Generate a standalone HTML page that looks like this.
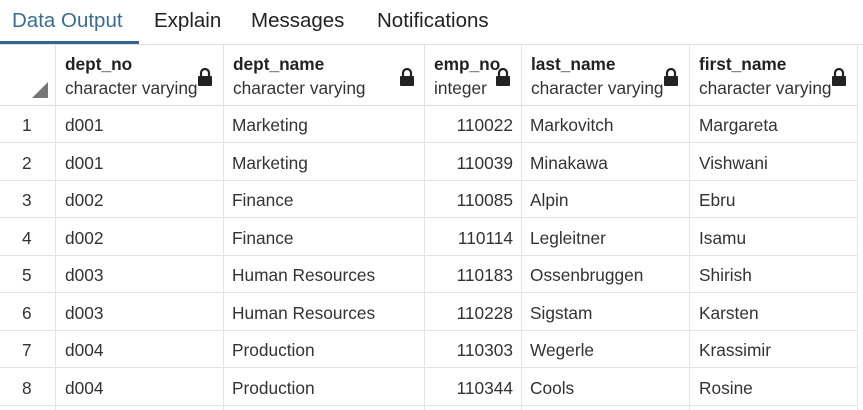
<!DOCTYPE html>
<html><head><style>
body{margin:0;width:863px;height:410px;overflow:hidden;background:#fff;font-family:"Liberation Sans",sans-serif;color:#222;position:relative}
.tabs{position:absolute;left:0;top:0;width:863px;height:44px;border-bottom:1px solid #dde0e6}
.tab{position:absolute;top:9px;font-size:20.5px;color:#222}
.ul{position:absolute;left:0;top:41px;width:139px;height:3px;background:#326690}
.v{position:absolute;top:45px;height:365px;width:1px;background:#e2e4e8}
.h{position:absolute;left:0;width:857px;height:1px;background:#e2e4e8}
.t{position:absolute;font-size:17.3px;color:#333;white-space:nowrap}
.b{font-weight:bold;color:#222}
.lock{position:absolute;width:16px;height:18px}
</style></head><body>
<div class="tabs">
<div class="tab" style="left:12px;color:#3a6c94">Data Output</div>
<div class="tab" style="left:154px">Explain</div>
<div class="tab" style="left:251px">Messages</div>
<div class="tab" style="left:377px">Notifications</div>
<div class="ul"></div>
</div>
<div style="position:absolute;left:0;top:45px;width:857px;height:365px;border-right:1px solid #e2e4e8"></div>
<div class="v" style="left:55px"></div><div class="v" style="left:223px"></div><div class="v" style="left:424px"></div><div class="v" style="left:521px"></div><div class="v" style="left:689px"></div><div class="v" style="left:857px"></div>
<div class="h" style="top:105px;background:#d8dbe0"></div>
<div class="h" style="top:142px"></div><div class="h" style="top:180px"></div><div class="h" style="top:217px"></div><div class="h" style="top:255px"></div><div class="h" style="top:292px"></div><div class="h" style="top:330px"></div><div class="h" style="top:367px"></div><div class="h" style="top:405px"></div>
<svg style="position:absolute;left:32px;top:82px" width="17" height="17"><polygon points="16,0 16,16 0,16" fill="#777"/></svg>
<div class="t b" style="left:65px;top:54px">dept_no</div><div class="t" style="left:65px;top:78px">character varying</div>
<div class="t b" style="left:233px;top:54px">dept_name</div><div class="t" style="left:233px;top:78px">character varying</div>
<div class="t b" style="left:434px;top:54px">emp_no</div><div class="t" style="left:434px;top:78px">integer</div>
<div class="t b" style="left:531px;top:54px">last_name</div><div class="t" style="left:531px;top:78px">character varying</div>
<div class="t b" style="left:699px;top:54px">first_name</div><div class="t" style="left:699px;top:78px">character varying</div>
<svg class="lock" style="left:197px;top:68px" viewBox="0 0 16 18"><path d="M4 8V5a4 4 0 0 1 8 0v3" fill="none" stroke="#222" stroke-width="2.2"/><rect x="1" y="8" width="14" height="10" rx="1" fill="#222"/></svg>
<svg class="lock" style="left:399px;top:68px" viewBox="0 0 16 18"><path d="M4 8V5a4 4 0 0 1 8 0v3" fill="none" stroke="#222" stroke-width="2.2"/><rect x="1" y="8" width="14" height="10" rx="1" fill="#222"/></svg>
<svg class="lock" style="left:495px;top:68px" viewBox="0 0 16 18"><path d="M4 8V5a4 4 0 0 1 8 0v3" fill="none" stroke="#222" stroke-width="2.2"/><rect x="1" y="8" width="14" height="10" rx="1" fill="#222"/></svg>
<svg class="lock" style="left:663px;top:68px" viewBox="0 0 16 18"><path d="M4 8V5a4 4 0 0 1 8 0v3" fill="none" stroke="#222" stroke-width="2.2"/><rect x="1" y="8" width="14" height="10" rx="1" fill="#222"/></svg>
<svg class="lock" style="left:831px;top:68px" viewBox="0 0 16 18"><path d="M4 8V5a4 4 0 0 1 8 0v3" fill="none" stroke="#222" stroke-width="2.2"/><rect x="1" y="8" width="14" height="10" rx="1" fill="#222"/></svg>
<div id="rows"></div>
<script>
var d=[["d001","Marketing","110022","Markovitch","Margareta"],["d001","Marketing","110039","Minakawa","Vishwani"],["d002","Finance","110085","Alpin","Ebru"],["d002","Finance","110114","Legleitner","Isamu"],["d003","Human Resources","110183","Ossenbruggen","Shirish"],["d003","Human Resources","110228","Sigstam","Karsten"],["d004","Production","110303","Wegerle","Krassimir"],["d004","Production","110344","Cools","Rosine"]];
var h="";d.forEach(function(r,i){var y=115+i*37.5;
h+='<div class="t" style="left:22px;top:'+y+'px">'+(i+1)+'</div>';
h+='<div class="t" style="left:65px;top:'+y+'px">'+r[0]+'</div>';
h+='<div class="t" style="left:232px;top:'+y+'px">'+r[1]+'</div>';
h+='<div class="t" style="right:350px;top:'+y+'px">'+r[2]+'</div>';
h+='<div class="t" style="left:530px;top:'+y+'px">'+r[3]+'</div>';
h+='<div class="t" style="left:699px;top:'+y+'px">'+r[4]+'</div>';});
document.getElementById("rows").innerHTML=h;
</script>
</body></html>
